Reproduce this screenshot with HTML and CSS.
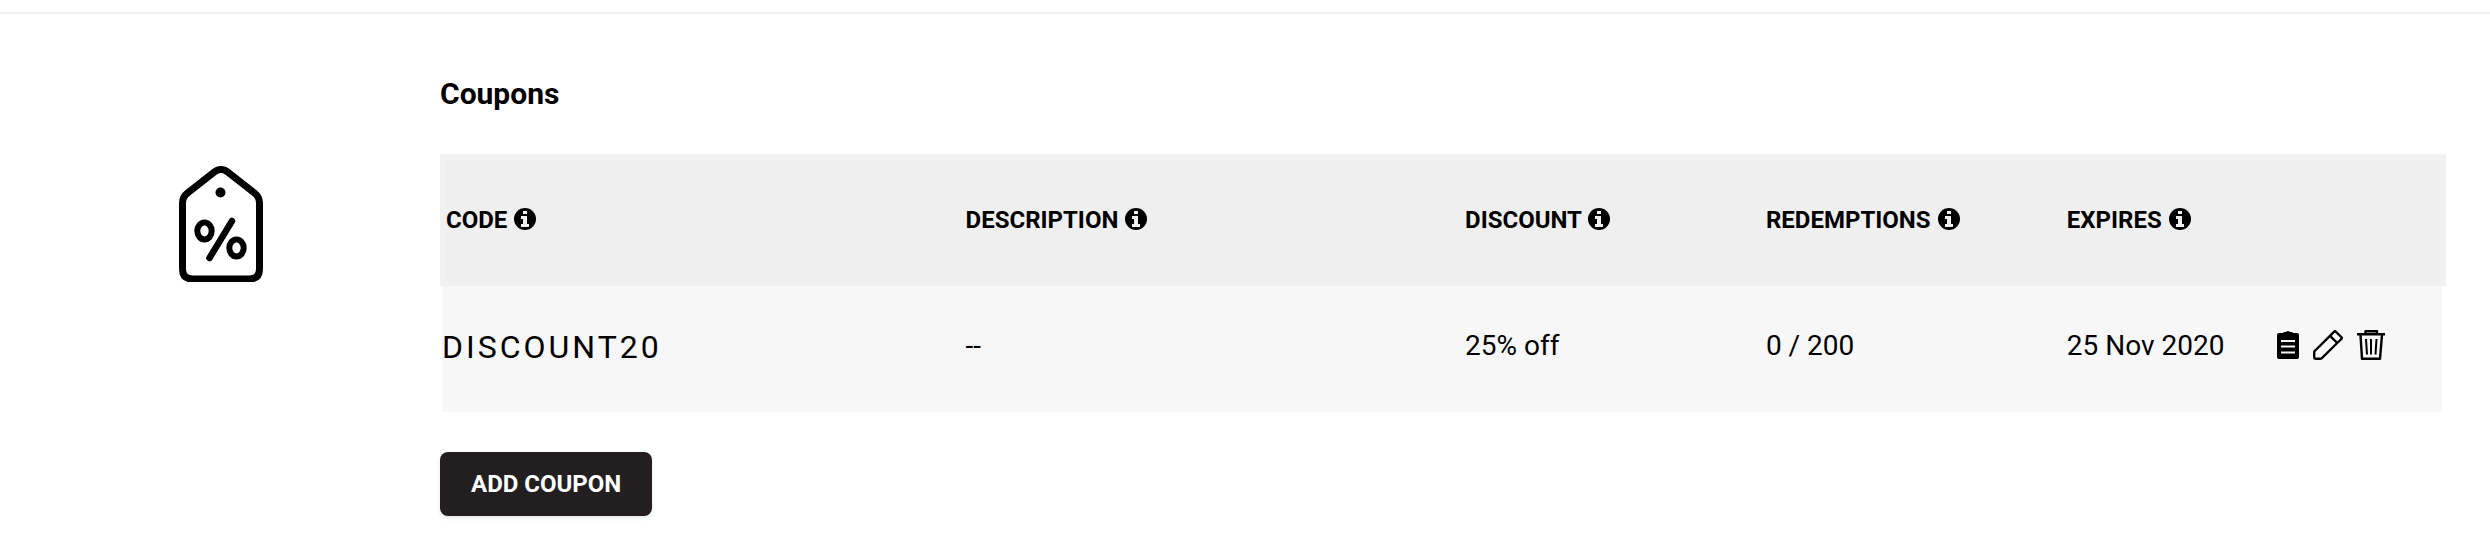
FILE: index.html
```html
<!DOCTYPE html>
<html lang="en">
<head>
    <meta charset="UTF-8">
    <meta name="viewport" content="width=device-width, initial-scale=1.0">
    <title>Coupons</title>
    <link rel="stylesheet" href="styles.css">
</head>
<body>
    <!-- shared icon shapes -->
    <svg class="sprite" aria-hidden="true">
        <symbol id="info" viewBox="0 0 22 22">
            <circle cx="11" cy="11" r="11" fill="#000"/>
            <path d="M9 3h4v3H9zM7 8h6v8h2v3H7v-3h2v-5H7z" fill="#efefef"/>
        </symbol>
    </svg>

    <section class="coupons">
        <div class="coupons-icon">
            <svg width="84" height="116" viewBox="0 0 84 116" fill="none" stroke="#000" stroke-linecap="round" stroke-linejoin="round">
                <path d="M36 5.500Q42 1.500 48 5.500L75.500 27Q80.500 31 80.500 37V103Q80.500 113 70.500 113H13.500Q3.500 113 3.500 103V37Q3.500 31 8.500 27Z" stroke-width="7"/>
                <circle cx="41.500" cy="26.500" r="5" fill="#000" stroke="none"/>
                <path d="M53 55L30.500 92" stroke-width="6.500"/>
                <ellipse cx="25.500" cy="65" rx="7.200" ry="8.500" stroke-width="6"/>
                <ellipse cx="57.500" cy="82" rx="7.200" ry="8.500" stroke-width="6"/>
            </svg>
        </div>

        <div class="coupons-content">
            <h2>Coupons</h2>
            <table>
                <colgroup>
                    <col class="col-code">
                    <col class="col-description">
                    <col class="col-discount">
                    <col class="col-redemptions">
                    <col class="col-expires">
                    <col>
                </colgroup>
                <thead>
                    <tr>
                        <th>CODE <svg class="info"><use href="#info"/></svg></th>
                        <th>DESCRIPTION <svg class="info"><use href="#info"/></svg></th>
                        <th>DISCOUNT <svg class="info"><use href="#info"/></svg></th>
                        <th>REDEMPTIONS <svg class="info"><use href="#info"/></svg></th>
                        <th>EXPIRES <svg class="info"><use href="#info"/></svg></th>
                        <th></th>
                    </tr>
                </thead>
                <tbody>
                    <tr>
                        <td class="code">DISCOUNT20</td>
                        <td>--</td>
                        <td>25% off</td>
                        <td>0 / 200</td>
                        <td>25 Nov 2020</td>
                        <td>
                            <div class="actions">
                                <button type="button" aria-label="Copy">
                                    <svg width="22" height="30" viewBox="0 0 22 30">
                                        <path d="M2 3H6L7 2H9Q11 0 13 2H15L16 3H20Q22 3 22 5V27Q22 29 20 29H2Q0 29 0 27V5Q0 3 2 3Z" fill="#000"/>
                                        <path d="M4 11H18M4 16.500H18M4 22.500H18" stroke="#f7f7f7" stroke-width="2"/>
                                    </svg>
                                </button>
                                <button type="button" aria-label="Edit">
                                    <svg width="30" height="30" viewBox="0 0 30 30" fill="none" stroke="#000" stroke-width="2.400" stroke-linejoin="round">
                                        <path d="M1.200 21.500L21 1.800Q22 .8 23 1.800L28.300 7Q29.300 8 28.300 9L9 28Q8 28.800 7 28.800H3Q1.200 28.800 1.200 27ZM17 5.800L24.300 13"/>
                                    </svg>
                                </button>
                                <button type="button" aria-label="Delete">
                                    <svg width="28" height="30" viewBox="0 0 28 30" fill="none" stroke="#000" stroke-width="2.400" stroke-linejoin="round">
                                        <path d="M0 4.300H28M8.500 4V1.200H20V4M3.500 5L5 28.800H23L25 5"/>
                                        <path d="M9 9L10 24.500M14 9V24.500M19.500 9L18.500 24.500" stroke-width="2"/>
                                    </svg>
                                </button>
                            </div>
                        </td>
                    </tr>
                </tbody>
            </table>
            <button type="button" class="add-coupon">ADD COUPON</button>
        </div>
    </section>
</body>
</html>
```

FILE: styles.css
```css
body {
    font-family: Roboto, "Liberation Sans", sans-serif;
    margin: 0;
    padding-top: 12px;
    background: #fff;
    color: #000;
}

.sprite {
    display: none;
}

.coupons {
    display: grid;
    grid-template-columns: 440px 1fr;
    border-top: 2px solid #eee;
    padding: 60px 44px 20px 0;
}

.coupons-icon {
    padding: 92px 0 0 2px;
    text-align: center;
}

h2 {
    margin: 0 0 40px;
    font-size: 30px;
    line-height: 40px;
}

table {
    width: 100%;
    table-layout: fixed;
    border-collapse: separate;
    border-spacing: 0;
}

.col-code {
    width: 25.9%;
}

.col-description {
    width: 24.9%;
}

.col-discount,
.col-redemptions {
    width: 15%;
}

.col-expires {
    width: 10.4%;
}

th, td {
    padding: 0 0 0 6px;
    text-align: left;
    white-space: nowrap;
}

th {
    height: 120px;
    background: #efefef;
    border: 0 solid #f1f1f1;
    border-width: 6px 0;
    font-size: 24px;
}

th:first-child {
    border-left-width: 6px;
    padding-left: 0;
}

th:last-child {
    border-right-width: 6px;
}

td {
    height: 118px;
    padding-bottom: 8px;
    background: #f7f7f7;
    font-size: 28px;
}

/* the row sits slightly inside the header */
td:first-child {
    border-left: 2px solid #fff;
    padding-left: 0;
}

td:last-child {
    border-right: 4px solid #fff;
    padding-left: 8px;
}

td.code {
    height: 122px;
    padding-bottom: 4px;
    font-size: 32px;
    letter-spacing: 3px;
}

.info {
    width: 22px;
    height: 22px;
    margin-left: 1px;
    vertical-align: -2px;
}

.actions {
    display: flex;
    align-items: center;
    gap: 14px;
}

button {
    padding: 0;
    border: none;
    background: none;
    font-family: inherit;
    cursor: pointer;
}

button svg {
    display: block;
}

.add-coupon {
    margin-top: 40px;
    padding: 0 31px;
    height: 64px;
    border-radius: 8px;
    background: #231f20;
    box-shadow: 0 2px 4px rgba(0, 0, 0, 0.1);
    color: #fff;
    font-size: 24px;
    font-weight: bold;
}
```
